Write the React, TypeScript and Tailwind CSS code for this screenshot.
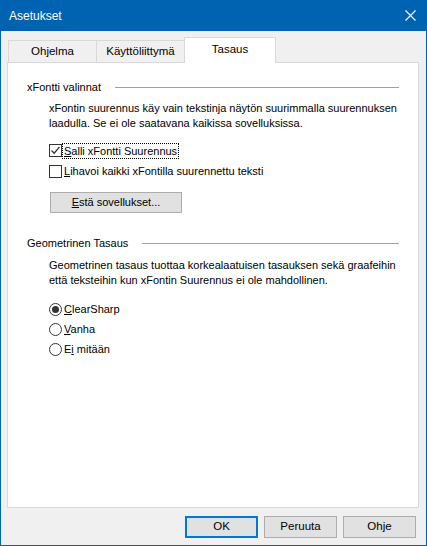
import React from 'react';

const font = { fontFamily: '"Liberation Sans", Arial, sans-serif' };

const Checkbox = ({ checked }: { checked?: boolean }) => (
  <span className="w-[13px] h-[13px] border border-[#333333] bg-white flex items-center justify-center shrink-0">
    {checked && (
      <svg width="11" height="11" viewBox="0 0 11 11">
        <path d="M1.5 5.5 L4.2 8.2 L9.5 1.8" fill="none" stroke="#333333" strokeWidth="1.3" />
      </svg>
    )}
  </span>
);

const Radio = ({ checked }: { checked?: boolean }) => (
  <span className="w-[13px] h-[13px] rounded-full border border-[#333333] bg-white flex items-center justify-center shrink-0">
    {checked && <span className="w-[7px] h-[7px] rounded-full bg-[#333333]" />}
  </span>
);

const GroupHeader = ({ title }: { title: string }) => (
  <div className="flex items-center h-[15px] pr-[19px]">
    <span className="whitespace-nowrap">{title}</span>
    <div className="flex-1 ml-[14px] h-px bg-[#a0a0a0]" />
  </div>
);

const Button = ({ children, primary }: { children: React.ReactNode; primary?: boolean }) => (
  <button
    className={
      'w-[73px] h-[22px] bg-[#e1e1e1] flex items-center justify-center ' +
      (primary ? 'border-2 border-[#0078d7]' : 'border border-[#adadad]')
    }
  >
    {children}
  </button>
);

export default function App() {
  return (
    <div className="w-[427px] h-[546px] bg-[#0063b1] px-px pb-px flex flex-col text-[11px] text-black" style={font}>
      <div className="h-[31px] flex items-center justify-between pl-[8px] pr-[10px] text-white text-[12px]">
        <span>Asetukset</span>
        <svg width="11" height="11" viewBox="0 0 11 11">
          <path d="M0.5 0.5 L10.5 10.5 M10.5 0.5 L0.5 10.5" stroke="white" strokeWidth="1.1" />
        </svg>
      </div>
      <div className="flex-1 bg-[#f0f0f0] flex flex-col pl-[6px] pr-[7px] pt-[6px]">
        <div className="flex items-end h-[25px] pl-[1px] text-[11.5px]">
          <div className="w-[89px] h-[22px] border border-b-0 border-[#d9d9d9] flex items-center justify-center">Ohjelma</div>
          <div className="w-[88px] h-[22px] border border-l-0 border-b-0 border-[#d9d9d9] flex items-center justify-center">Käyttöliittymä</div>
          <div className="w-[92px] h-[26px] -ml-px -mb-px relative z-10 bg-white border border-b-0 border-[#d9d9d9] flex items-center justify-center pb-[1px]">Tasaus</div>
        </div>
        <div className="h-[446px] bg-white border border-[#d9d9d9] pl-[19px] pt-[17px]">
          <GroupHeader title="xFontti valinnat" />
          <div className="ml-[22px] mt-[6px] leading-[15px] whitespace-nowrap">
            <div>xFontin suurennus käy vain tekstinja näytön suurimmalla suurennuksen</div>
            <div>laadulla. Se ei ole saatavana kaikissa sovelluksissa.</div>
          </div>
          <div className="ml-[22px] mt-[9px]">
            <div className="h-[21px] flex items-center">
              <Checkbox checked />
              <span className="ml-px px-px outline-1 outline-dotted outline-black leading-[14px]">
                <u>S</u>alli xFontti Suurennus
              </span>
            </div>
            <div className="h-[21px] flex items-center">
              <Checkbox />
              <span className="ml-[2px]">
                <u>L</u>ihavoi kaikki xFontilla suurennettu teksti
              </span>
            </div>
            <button className="mt-[10px] ml-px w-[132px] h-[21px] bg-[#e1e1e1] border border-[#adadad] flex items-center justify-center">
              <span>
                <u>E</u>stä sovellukset...
              </span>
            </button>
          </div>
          <div className="mt-[23px]">
            <GroupHeader title="Geometrinen Tasaus" />
          </div>
          <div className="ml-[22px] mt-[7px] leading-[15px] whitespace-nowrap">
            <div>Geometrinen tasaus tuottaa korkealaatuisen tasauksen sekä graafeihin</div>
            <div>että teksteihin kun xFontin Suurennus ei ole mahdollinen.</div>
          </div>
          <div className="ml-[22px] mt-[11px]">
            <div className="h-[20px] flex items-center">
              <Radio checked />
              <span className="ml-[2px]">
                <u>C</u>learSharp
              </span>
            </div>
            <div className="h-[20px] flex items-center">
              <Radio />
              <span className="ml-[2px]">
                <u>V</u>anha
              </span>
            </div>
            <div className="h-[20px] flex items-center">
              <Radio />
              <span className="ml-[2px]">
                E<u>i</u> mitään
              </span>
            </div>
          </div>
        </div>
        <div className="flex justify-end gap-[6px] mt-[8px] pr-[3px] text-[11.5px]">
          <Button primary>OK</Button>
          <Button>Peruuta</Button>
          <Button>Ohje</Button>
        </div>
      </div>
    </div>
  );
}
